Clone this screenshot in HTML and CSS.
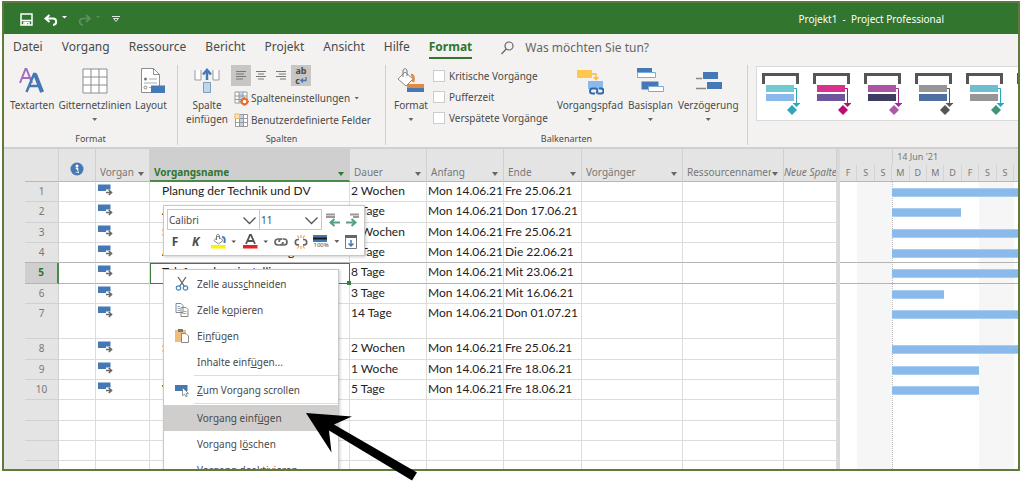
FILE: index.html
```html
<!DOCTYPE html>
<html lang="de">
<head>
  <meta charset="UTF-8" />
  <meta name="viewport" content="width=device-width, initial-scale=1.0" />
  <title>Projekt1 - Project Professional</title>
  <link rel="stylesheet" href="styles.css">
</head>
<body>
  <!-- Shared icons -->
  <svg class="sprite" aria-hidden="true">
    <symbol id="i-task" viewBox="0 0 15 12">
      <path d="M0 .5h12.500v5H8V7H0z" fill="#4479b5"/>
      <path d="M8 8.500h5M10.800 6l2.700 2.500-2.700 2.500" fill="none" stroke="#666" stroke-width="1.600"/>
    </symbol>
    <symbol id="i-style" viewBox="0 0 38 42">
      <path d="M1.500 11V1.500h34V11" fill="none" stroke="#555" stroke-width="3"/>
      <path class="bar1" d="M4 12h28v7H4z"/>
      <path class="bar2" d="M4 21h28v7H4z"/>
      <path class="link" d="M32 15.500h2.500V30" fill="none"/>
      <path class="head" d="M30.500 30h8L34.500 34z"/>
      <path class="dia" d="M30 32l5 5-5 5-5-5z"/>
    </symbol>
  </svg>

  <div class="window">
    <header class="titlebar">
      <div class="quick">
        <button type="button" aria-label="Speichern"><svg width="13" height="13" viewBox="0 0 13 13"><path d="M1 1h11v11H1zM1 7.500h11M4 12V9.500h5V12" fill="none" stroke="#fff" stroke-width="1.500"/><path d="M5 9.500h2V12H5z" fill="#fff"/></svg></button>
        <button type="button" aria-label="Rückgängig"><svg width="23" height="12" viewBox="0 0 23 12"><path d="M5.500 1L1.500 4.500 5.500 8M2 4.500h7c4 0 4.500 6 0 6.500" fill="none" stroke="#fff" stroke-width="2"/><path d="M18 2h5l-2.500 2.500z" fill="#fff"/></svg></button>
        <button type="button" aria-label="Wiederholen" disabled><svg width="23" height="12" viewBox="0 0 23 12"><path d="M8 1l4 3.500L8 8M12 4.500H5c-4.500 0-4.500 6 0 6.500" fill="none" stroke="#5b915a" stroke-width="1.700"/><path d="M18 2h4l-2 2z" fill="#5b915a"/></svg></button>
        <button type="button" aria-label="Symbolleiste anpassen"><svg width="8" height="7" viewBox="0 0 8 7"><path d="M0 .5h8M1.500 2.500h5L4 5.500z" fill="none" stroke="#dfe9df"/></svg></button>
      </div>
      <div class="title">Projekt1 &nbsp;-&nbsp; Project Professional</div>
    </header>

    <nav class="tabs">
      <a href="#datei">Datei</a>
      <a href="#vorgang">Vorgang</a>
      <a href="#ressource">Ressource</a>
      <a href="#bericht">Bericht</a>
      <a href="#projekt">Projekt</a>
      <a href="#ansicht">Ansicht</a>
      <a href="#hilfe">Hilfe</a>
      <a href="#format" class="active">Format</a>
      <label class="search">
        <svg width="13" height="14" viewBox="0 0 13 14"><circle cx="8" cy="5" r="4" fill="none" stroke="#666" stroke-width="1.200"/><path d="M5.200 8L.5 13" stroke="#666" stroke-width="1.200"/></svg>
        <input type="text" placeholder="Was möchten Sie tun?" aria-label="Was möchten Sie tun?">
      </label>
    </nav>

    <section class="ribbon">
      <div class="group group-format">
        <div class="tools">
          <button type="button" class="big">
            <svg width="28" height="28" viewBox="0 0 28 28"><path d="M2 16L7.500 2h1L14 16M4 11h8" fill="none" stroke="#a26cc2" stroke-width="2"/><path d="M8.500 25L16 7h1l7.500 18M11.500 19h9.500" fill="none" stroke="#4479b5" stroke-width="2.500"/><path d="M17 7l7 18" stroke="#4479b5" stroke-width="4"/></svg>
            <span>Textarten</span>
          </button>
          <button type="button" class="big">
            <svg width="28" height="28" viewBox="0 0 28 28"><path d="M2 2h24v24H2zM10 2v24M18 2v24M2 10h24M2 18h24" fill="#fff" stroke="#8d8d8d"/></svg>
            <span>Gitternetzlinien</span>
            <i class="caret"></i>
          </button>
          <button type="button" class="big">
            <svg width="28" height="28" viewBox="0 0 28 28"><path d="M4.500 1.500h12l6 6v18h-18z" fill="#fff" stroke="#8d8d8d"/><path d="M16.500 1.500v6h6" fill="none" stroke="#8d8d8d"/><circle cx="8.500" cy="12" r="1.500" fill="#777"/><circle cx="8.500" cy="20.500" r="1.500" fill="none" stroke="#888"/><path d="M12 12h8M7 16h13M12 20.500h3" stroke="#aaa"/><path d="M14 18.500h14V26H14z" fill="#4479b5"/></svg>
            <span>Layout</span>
          </button>
        </div>
        <div class="group-name">Format</div>
      </div>

      <div class="group group-columns">
        <div class="tools">
          <button type="button" class="big">
            <svg width="28" height="28" viewBox="0 0 28 28"><path d="M2 3v10h6V3M20 3v10h6V3" fill="#fff" stroke="#999"/><path d="M14 13V4M10 7.500L14 3l4 4.500" fill="none" stroke="#4479b5" stroke-width="2.500"/><path d="M10.500 15.500h7v10h-7z" fill="#bed5ea" stroke="#7d9cba"/></svg>
            <span>Spalte</span>
            <span class="second">einfügen</span>
          </button>
          <div class="stack">
            <div class="aligns">
              <button type="button" class="on" aria-label="Linksbündig"><svg width="12" height="11" viewBox="0 0 12 11"><path d="M1 1.500h10M1 4h8M1 6.500h10M1 9h7" stroke="#777"/></svg></button>
              <button type="button" aria-label="Zentriert"><svg width="12" height="11" viewBox="0 0 12 11"><path d="M1 1.500h10M3 4h6M1 6.500h10M3 9h6" stroke="#777"/></svg></button>
              <button type="button" aria-label="Rechtsbündig"><svg width="12" height="11" viewBox="0 0 12 11"><path d="M1 1.500h10M4 4h7M1 6.500h10M5 9h6" stroke="#777"/></svg></button>
              <button type="button" class="on wrap" aria-label="Textumbruch"><span>ab</span><span>c<svg width="7" height="7" viewBox="0 0 7 7"><path d="M6 0v3.500H1M3 1.500l-2 2 2 2" fill="none" stroke="#4479b5" stroke-width="1.300"/></svg></span></button>
            </div>
            <button type="button" class="small">
              <svg width="15" height="15" viewBox="0 0 15 15"><path d="M1 1h12v11H1z" fill="#fff" stroke="#999"/><path d="M5 1h4v11H5z" fill="#bcd3e9"/><path d="M1 5h12M1 8.500h12M5 1v11M9 1v11" stroke="#999"/><circle cx="10.500" cy="10.500" r="2.800" fill="#fff" stroke="#e5702b" stroke-width="2"/><path d="M10.500 6v2M10.500 13v2M6 10.500h2M13 10.500h2" stroke="#e5702b" stroke-width="1.500"/></svg>
              Spalteneinstellungen<i class="caret"></i>
            </button>
            <button type="button" class="small">
              <svg width="15" height="15" viewBox="0 0 15 15"><path d="M1.500 1.500h12v12h-12z" fill="#fff" stroke="#999"/><path d="M6 2h4v11H6z" fill="#bcd3e9"/><path d="M1 5.500h12M1 9.500h12M5.500 1v12M9.500 1v12" stroke="#999"/><path d="M1 1h4.500v4.500H1z" fill="#fbe3bb" stroke="#efb661"/></svg>
              Benutzerdefinierte Felder
            </button>
          </div>
        </div>
        <div class="group-name">Spalten</div>
      </div>

      <div class="group group-bars">
        <div class="tools">
          <button type="button" class="big">
            <svg width="28" height="28" viewBox="0 0 28 28"><path d="M8 5l8 7-7 7-8-7z" fill="#fff" stroke="#888"/><path d="M6 10V4c0-3 4-3 4 0v5" fill="none" stroke="#777"/><path d="M14 8c3 0 3 4 2 7" fill="none" stroke="#e08a45" stroke-width="2.500"/><path d="M10 17h17v4H10z" fill="#e08a45"/><path d="M10 21h17v4H10z" fill="#4479b5"/></svg>
            <span>Format</span>
            <i class="caret"></i>
          </button>
          <div class="checks">
            <label><input type="checkbox">Kritische Vorgänge</label>
            <label><input type="checkbox">Pufferzeit</label>
            <label><input type="checkbox">Verspätete Vorgänge</label>
          </div>
          <button type="button" class="big">
            <svg width="28" height="28" viewBox="0 0 28 28"><path d="M1 3h15v8H1z" fill="#fdc84b"/><path d="M16 7h4v5M17.500 10l2.500 2.500 2.500-2.500" fill="none" stroke="#fbb92e" stroke-width="1.300"/><path d="M12 14h15v8H12z" fill="#8ab9ec"/><path d="M20 21.500h-3.500a2 2 0 0 0 0 5H19M20 21.500a2.500 2.500 0 0 1 0 4.500M21.500 26.500H25a2 2 0 0 0 0-5h-2" fill="none" stroke="#2f69ab" stroke-width="2"/></svg>
            <span>Vorgangspfad</span>
            <i class="caret"></i>
          </button>
          <button type="button" class="big">
            <svg width="28" height="28" viewBox="0 0 28 28"><path d="M1 1h15v5H1z" fill="#4479b5"/><path d="M1.500 5.500h18v5h-18z" fill="#fff" stroke="#7eabd5"/><path d="M5.500 14.500h17v8h-17z" fill="#4479b5"/><path d="M12.500 19.500h15v5h-15z" fill="#fff" stroke="#7eabd5"/></svg>
            <span>Basisplan</span>
            <i class="caret"></i>
          </button>
          <button type="button" class="big">
            <svg width="28" height="28" viewBox="0 0 28 28"><path d="M9 5h15v7H9zM13 15h15v7H13z" fill="#4479b5"/><path d="M2 11.500h6M2 21.500h10" stroke="#888" stroke-width="1.500"/></svg>
            <span>Verzögerung</span>
            <i class="caret"></i>
          </button>
        </div>
        <div class="group-name">Balkenarten</div>
      </div>

      <div class="gallery">
        <button type="button" class="s-teal" aria-label="Format 1"><svg width="38" height="42"><use href="#i-style"/></svg></button>
        <button type="button" class="s-pink" aria-label="Format 2"><svg width="38" height="42"><use href="#i-style"/></svg></button>
        <button type="button" class="s-plum" aria-label="Format 3"><svg width="38" height="42"><use href="#i-style"/></svg></button>
        <button type="button" class="s-gray" aria-label="Format 4"><svg width="38" height="42"><use href="#i-style"/></svg></button>
        <button type="button" class="s-green" aria-label="Format 5"><svg width="38" height="42"><use href="#i-style"/></svg></button>
        <button type="button" class="s-gray" aria-label="Format 6"><svg width="38" height="42"><use href="#i-style"/></svg></button>
      </div>
    </section>

    <main class="sheet">
      <table class="tasks">
        <colgroup>
          <col class="c-num"><col class="c-info"><col class="c-mode"><col class="c-name"><col class="c-date"><col class="c-date"><col class="c-end"><col class="c-pre"><col class="c-pre"><col class="c-new">
        </colgroup>
        <thead>
          <tr>
            <th></th>
            <th class="info"><svg width="14" height="14" viewBox="0 0 14 14"><circle cx="7" cy="7" r="6.500" fill="#4479b5"/><path d="M6 3h2v2H6zM5.500 6H8v4.500h1M5.500 10.500H9" stroke="#fff" fill="#fff" stroke-width=".6"/></svg></th>
            <th><div><span>Vorgan</span><i class="drop"></i></div></th>
            <th class="current"><div><span>Vorgangsname</span><i class="drop"></i></div></th>
            <th><div><span>Dauer</span><i class="drop"></i></div></th>
            <th><div><span>Anfang</span><i class="drop"></i></div></th>
            <th><div><span>Ende</span><i class="drop"></i></div></th>
            <th><div><span>Vorgänger</span><i class="drop"></i></div></th>
            <th><div><span>Ressourcennamen</span><i class="drop"></i></div></th>
            <th class="new"><div><span>Neue Spalte</span></div></th>
          </tr>
        </thead>
        <tbody>
          <tr><th>1</th><td></td><td><svg class="task"><use href="#i-task"/></svg></td><td class="name">Planung der Technik und DV</td><td>2 Wochen</td><td>Mon 14.06.21</td><td>Fre 25.06.21</td><td></td><td></td><td></td></tr>
          <tr><th>2</th><td></td><td><svg class="task"><use href="#i-task"/></svg></td><td class="name">A</td><td>4 Tage</td><td>Mon 14.06.21</td><td>Don 17.06.21</td><td></td><td></td><td></td></tr>
          <tr><th>3</th><td></td><td><svg class="task"><use href="#i-task"/></svg></td><td class="name">S</td><td>2 Wochen</td><td>Mon 14.06.21</td><td>Fre 25.06.21</td><td></td><td></td><td></td></tr>
          <tr><th>4</th><td></td><td><svg class="task"><use href="#i-task"/></svg></td><td class="name">Arbeitsmittelbeschaffung</td><td>7 Tage</td><td>Mon 14.06.21</td><td>Die 22.06.21</td><td></td><td></td><td></td></tr>
          <tr class="selected"><th>5</th><td></td><td><svg class="task"><use href="#i-task"/></svg></td><td class="name">Telefonanlage installieren</td><td>8 Tage</td><td>Mon 14.06.21</td><td>Mit 23.06.21</td><td></td><td></td><td></td></tr>
          <tr><th>6</th><td></td><td><svg class="task"><use href="#i-task"/></svg></td><td class="name"></td><td>3 Tage</td><td>Mon 14.06.21</td><td>Mit 16.06.21</td><td></td><td></td><td></td></tr>
          <tr class="tall"><th>7</th><td></td><td><svg class="task"><use href="#i-task"/></svg></td><td class="name"></td><td>14 Tage</td><td>Mon 14.06.21</td><td>Don 01.07.21</td><td></td><td></td><td></td></tr>
          <tr><th>8</th><td></td><td><svg class="task"><use href="#i-task"/></svg></td><td class="name">S</td><td>2 Wochen</td><td>Mon 14.06.21</td><td>Fre 25.06.21</td><td></td><td></td><td></td></tr>
          <tr><th>9</th><td></td><td><svg class="task"><use href="#i-task"/></svg></td><td class="name"></td><td>1 Woche</td><td>Mon 14.06.21</td><td>Fre 18.06.21</td><td></td><td></td><td></td></tr>
          <tr><th>10</th><td></td><td><svg class="task"><use href="#i-task"/></svg></td><td class="name">V</td><td>5 Tage</td><td>Mon 14.06.21</td><td>Fre 18.06.21</td><td></td><td></td><td></td></tr>
          <tr><th></th><td></td><td></td><td></td><td></td><td></td><td></td><td></td><td></td><td></td></tr>
          <tr><th></th><td></td><td></td><td></td><td></td><td></td><td></td><td></td><td></td><td></td></tr>
          <tr><th></th><td></td><td></td><td></td><td></td><td></td><td></td><td></td><td></td><td></td></tr>
          <tr><th></th><td></td><td></td><td></td><td></td><td></td><td></td><td></td><td></td><td></td></tr>
        </tbody>
      </table>

      <div class="chart">
        <div class="scale">
          <div class="weeks"><span></span><span>14 Jun '21</span></div>
          <div class="days"><span>F</span><span>S</span><span>S</span><span>M</span><span>D</span><span>M</span><span>D</span><span>F</span><span>S</span><span>S</span></div>
        </div>
        <div class="plot">
          <div class="stripes"><i></i><i class="off"></i><i class="off"></i><i class="start"></i><i></i><i></i><i></i><i></i><i class="off"></i><i class="off"></i></div>
          <div class="line"><b style="width: 170%"></b></div>
          <div class="line"><b style="width: 57%"></b></div>
          <div class="line"><b style="width: 170%"></b></div>
          <div class="line"><b style="width: 128%"></b></div>
          <div class="line selected"><b style="width: 142%"></b></div>
          <div class="line"><b style="width: 43%"></b></div>
          <div class="line tall"><b style="width: 256%"></b></div>
          <div class="line"><b style="width: 170%"></b></div>
          <div class="line"><b style="width: 71%"></b></div>
          <div class="line"><b style="width: 71%"></b></div>
        </div>
      </div>
    </main>

    <!-- Mini toolbar -->
    <div class="minibar">
      <div class="mini-fields">
        <div class="field font"><select aria-label="Schriftart"><option>Calibri</option></select><svg width="13" height="8" viewBox="0 0 13 8"><path d="M.5.5l6 6 6-6" fill="none" stroke="#555" stroke-width="1.300"/></svg></div>
        <div class="field size"><select aria-label="Schriftgrad"><option>11</option></select><svg width="13" height="8" viewBox="0 0 13 8"><path d="M.5.5l6 6 6-6" fill="none" stroke="#555" stroke-width="1.300"/></svg></div>
        <button type="button" aria-label="Höher stufen"><svg width="15" height="14" viewBox="0 0 15 14"><path d="M0 1.500h9M0 4h9" stroke="#999" stroke-width="2"/><path d="M14 9.500H5M8.500 6L4.500 9.500l4 3.500" fill="none" stroke="#56a183" stroke-width="2"/></svg></button>
        <button type="button" aria-label="Tiefer stufen"><svg width="15" height="14" viewBox="0 0 15 14"><path d="M5 1.500h9M8 4h6" stroke="#999" stroke-width="2"/><path d="M1 9.500h9M6.500 6l4 3.500-4 3.500" fill="none" stroke="#56a183" stroke-width="2"/></svg></button>
      </div>
      <div class="mini-tools">
        <button type="button" class="bold">F</button>
        <button type="button" class="bold italic">K</button>
        <button type="button" aria-label="Hintergrundfarbe"><svg width="26" height="15" viewBox="0 0 26 15"><path d="M7 2l5 4.500L7.500 10 3 6.500z" fill="#fff" stroke="#888"/><path d="M5.500 6V2c0-2 3-2 3 0v3" fill="none" stroke="#777"/><path d="M11 3c3 0 3 2 2.500 6" fill="none" stroke="#4479b5" stroke-width="2"/><path d="M0 11h14.500v3.500H0z" fill="#fff100"/><path d="M20.500 6.500h4.500L22.700 9z" fill="#555"/></svg></button>
        <button type="button" aria-label="Schriftfarbe"><svg width="26" height="15" viewBox="0 0 26 15"><path d="M3 10L7 .8h1L12 10M4.500 7h6" fill="none" stroke="#555" stroke-width="1.800"/><path d="M0 11h14.500v3.500H0z" fill="#e81f27"/><path d="M20.500 6.500h4.500L22.700 9z" fill="#555"/></svg></button>
        <button type="button" aria-label="Verknüpfen"><svg width="14" height="14" viewBox="0 0 14 14"><path d="M7.500 4H4a3 3 0 0 0 0 6h2M5 7a3 3 0 0 1 3-3M6.500 10H10a3 3 0 0 0 0-6H8.500M9 7a3 3 0 0 1-3 3" fill="none" stroke="#666" stroke-width="1.700"/></svg></button>
        <button type="button" aria-label="Verknüpfung aufheben"><svg width="14" height="14" viewBox="0 0 14 14"><path d="M5 4.500H4a2.700 2.700 0 0 0 0 5.400h1M9 4.500h1a2.700 2.700 0 0 1 0 5.400H9" fill="none" stroke="#666" stroke-width="1.700"/><path d="M7 0v3M3.500.5L5 3M10.500.5L9 3M7 14v-3M3.500 13.500L5 11M10.500 13.500L9 11" stroke="#ee9a4d" stroke-width="1.100"/></svg></button>
        <button type="button" class="percent" aria-label="100 % abgeschlossen"><svg width="14" height="7" viewBox="0 0 14 7"><path d="M0 0h14v7H0z" fill="#4479b5"/><path d="M0 2.500h14v2H0z" fill="#1c1c1c"/></svg><span>100%</span></button>
        <i class="caret"></i>
        <button type="button" aria-label="Scrollen"><svg width="12" height="14" viewBox="0 0 12 14"><path d="M.5.5h11v13H.5z" fill="#fff" stroke="#777"/><path d="M0 0h12v3H0z" fill="#666"/><path d="M6 5v6M3.500 8.500L6 11l2.500-2.500" fill="none" stroke="#4479b5" stroke-width="1.500"/></svg></button>
      </div>
    </div>

    <!-- Context menu -->
    <div class="menu" role="menu">
      <button type="button" role="menuitem"><svg width="14" height="14" viewBox="0 0 14 14"><path d="M3 0l6.500 9.500M11 0L4.500 9.500" stroke="#666" stroke-width="1.300"/><circle cx="3.500" cy="11" r="2.200" fill="none" stroke="#4b86bd" stroke-width="1.200"/><circle cx="10.500" cy="11" r="2.200" fill="none" stroke="#4b86bd" stroke-width="1.200"/></svg><span>Zelle auss<u>c</u>hneiden</span></button>
      <button type="button" role="menuitem"><svg width="14" height="14" viewBox="0 0 14 14"><path d="M1 .5h5l2 2v7H1zM6 4.500h5l2 2v7H6z" fill="#fff" stroke="#888"/><path d="M2.500 3.500H5M2.500 5.500H5M2.500 7.500H5M7.500 8.500h4M7.500 10.500h4" stroke="#7fb0dd"/></svg><span>Zelle k<u>o</u>pieren</span></button>
      <button type="button" role="menuitem"><svg width="14" height="14" viewBox="0 0 14 14"><path d="M0 1h11v12H0z" fill="#eebd7e"/><path d="M3 0h5v3H3z" fill="#777"/><path d="M6.500 4.500H11l2.500 2.500v6.500h-7z" fill="#fff" stroke="#888"/></svg><span>Ei<u>n</u>fügen</span></button>
      <button type="button" role="menuitem"><i></i><span>Inhalte einf<u>ü</u>gen...</span></button>
      <hr>
      <button type="button" role="menuitem"><svg width="14" height="14" viewBox="0 0 14 14"><path d="M0 2h12.500v6H0z" fill="#4479b5"/><path d="M7.500 4.500l6 6-2.500.2 1.300 2.500-1.500.5-1.200-2.500-2.100 1.500z" fill="#fff" stroke="#777" stroke-width=".8"/></svg><span><u>Z</u>um Vorgang scrollen</span></button>
      <hr>
      <button type="button" role="menuitem" class="hover"><i></i><span>Vorgang einf<u>ü</u>gen</span></button>
      <button type="button" role="menuitem"><i></i><span>Vorgang l<u>ö</u>schen</span></button>
      <button type="button" role="menuitem"><i></i><span>Vorgang deak<u>t</u>ivieren</span></button>
    </div>
  </div>

  <svg class="pointer" width="112" height="68" viewBox="0 0 112 68" aria-hidden="true"><path d="M0 0l46 3.500-18 8 83 48-5 8-83-50 2.500 22z"/></svg>
</body>
</html>
```
FILE: styles.css
```css
/* Variables & Reset */
:root {
  --green: #31752f;
  --frame: #5f7a3c;
  --ribbon: #f3f2f1;
  --head: #e4e4e4;
  --line: #dcdcdc;
  --mark: #b4b4b4;
  --text: #4a4a4a;
  --bar: #8ab9ec;
}
* { margin: 0; padding: 0; box-sizing: border-box; }
body { position: relative; height: 100vh; overflow: hidden; padding: 1px 4px 11px 2px; background: #fff; color: var(--text); font-family: 'Noto Sans', 'Open Sans', sans-serif; font-size: 10px; line-height: 14px; }
button, input, select { font: inherit; color: inherit; background: none; border: 0; }
button { white-space: nowrap; }
svg { display: block; flex: none; }
a { color: inherit; text-decoration: none; }
.sprite { position: absolute; width: 0; height: 0; }

.window { position: relative; display: flex; flex-direction: column; height: 100%; overflow: hidden; border: 2px solid var(--frame); background: #fff; }

/* Title bar */
.titlebar { display: flex; flex: none; justify-content: space-between; align-items: center; height: 31px; padding: 0 74px 0 16px; background: var(--green); color: #fff; }
.quick { display: flex; align-items: center; gap: 11px; padding-top: 2px; }
.quick button { display: block; }
.title { white-space: nowrap; }

/* Tabs */
.tabs { display: flex; flex: none; align-items: center; gap: 19px; height: 28px; padding-left: 9px; background: var(--ribbon); font-size: 12px; line-height: 20px; }
.tabs a { border-bottom: 2px solid transparent; }
.tabs .active { color: var(--green); font-weight: 700; border-color: var(--green); }
.search { display: flex; align-items: center; gap: 11px; margin-left: 10px; }
.search input { width: 160px; outline: 0; }
.search input::placeholder { color: #666; opacity: 1; }

/* Ribbon */
.ribbon { display: flex; flex: none; height: 87px; padding-top: 3px; background: var(--ribbon); border-bottom: 2px solid #d0d0d0; overflow: hidden; }
.group { display: flex; flex: none; flex-direction: column; justify-content: space-between; height: 80px; border-right: 1px solid #cfcfcf; }
.group-format { width: 174px; }
.group-columns { width: 208px; }
.group-bars { width: 362px; }
.group-name { text-align: center; font-size: 9px; line-height: 12px; }
.tools { display: flex; align-items: flex-start; }
.group-format .tools { gap: 4px; padding-left: 6px; }
.group-columns .tools { gap: 3px; padding-left: 8px; }
.group-bars .tools { gap: 5px; padding-left: 8px; }
.big { display: flex; flex-direction: column; align-items: center; padding-top: 2px; }
.big span { margin-top: 3px; }
.big .second { margin-top: 0; }
.caret { display: inline-block; flex: none; width: 5px; height: 3px; background: #666; clip-path: polygon(0 0, 100% 0, 50% 100%); }
.big .caret { margin-top: 6px; }
.stack { display: flex; flex-direction: column; }
.aligns { display: flex; height: 21px; margin-bottom: 1px; }
.aligns button { display: flex; align-items: center; justify-content: center; width: 20px; }
.aligns .on { background: #c8c6c4; }
.aligns .wrap { flex-direction: column; font-size: 9px; line-height: 10px; font-weight: 700; }
.wrap span { display: flex; align-items: center; }
.small { display: flex; align-items: center; gap: 2px; height: 22px; padding-left: 3px; }
.small .caret { margin-left: 2px; }
.checks { display: flex; flex-direction: column; width: 119px; }
.checks label { display: flex; align-items: center; gap: 4px; height: 21px; white-space: nowrap; }
.checks input { appearance: none; width: 12px; height: 12px; background: #fff; border: 1px solid #ccc; }

/* Style gallery */
.gallery { display: flex; flex: 1; gap: 13px; height: 55px; margin: 1px 0 0 8px; padding: 4px 5px; overflow: hidden; background: #fff; border: 1px solid #dadada; border-right: 0; }
.gallery button { flex: none; }
.bar1 { fill: var(--one); }
.bar2 { fill: var(--two); }
.link { stroke: var(--tip); }
.head { fill: var(--tip); }
.dia { fill: var(--dia); }
.s-teal { --one: #6fcad2; --two: #8ab9ec; --tip: #30a7b8; --dia: #30a7b8; }
.s-pink { --one: #d8328c; --two: #6f559b; --tip: #bd0a75; --dia: #bd0a75; }
.s-plum { --one: #aa55a3; --two: #3f3c61; --tip: #9b2a91; --dia: #ab5aa7; }
.s-gray { --one: #969696; --two: #4d70a2; --tip: #555; --dia: #555; }
.s-green { --one: #6cbfd1; --two: #969696; --tip: #2ca5bd; --dia: #41937b; }

/* Task table */
.sheet { display: flex; flex: 1; min-height: 0; padding-left: 21px; overflow: hidden; background: var(--head); }
.tasks { flex: none; width: 812px; align-self: flex-start; table-layout: fixed; border-collapse: separate; border-spacing: 0; background: #fff; }
.c-num { width: 34px; }
.c-info { width: 37px; }
.c-mode { width: 54px; }
.c-name { width: 200px; }
.c-date { width: 77px; }
.c-end { width: 78px; }
.c-pre { width: 101px; }
.c-new { width: 53px; }
.tasks th { background: var(--head); color: #777; font-weight: 400; border-right: 1px solid #d0d0d0; border-bottom: 1px solid #d0d0d0; }
.tasks thead th { height: 33px; padding: 0 3px 2px 4px; vertical-align: bottom; text-align: left; border-bottom-color: #b8b8b8; }
thead th div { display: flex; align-items: center; justify-content: space-between; }
thead th span { overflow: hidden; white-space: nowrap; }
.tasks thead .info { padding: 0 0 5px 11px; }
.drop { flex: none; width: 6px; height: 4px; margin: 4px 2px 0 1px; background: #666; clip-path: polygon(0 0, 100% 0, 50% 100%); }
.tasks thead .current { background: #cfcfcf; color: var(--green); font-weight: 700; padding-bottom: 1px; border-bottom: 2px solid #4a8a48; }
.current .drop { background: var(--green); }
.tasks thead .new { padding: 0 0 2px; font-style: italic; }
.tasks .new div { justify-content: flex-end; }
.tasks td { padding-left: 1px; overflow: hidden; white-space: nowrap; vertical-align: top; border-right: 1px solid var(--line); border-bottom: 1px solid var(--line); color: #222; font-family: Lato, 'Noto Sans', sans-serif; font-size: 12px; line-height: 18px; }
.tasks tbody th { vertical-align: top; line-height: 18px; }
.tasks tbody tr { height: 20px; }
.tasks tbody tr:nth-child(3n+2) { height: 21px; }
.tasks tbody tr.tall { height: 35px; }
.tasks .name { padding-left: 12px; }
.task { width: 15px; height: 12px; margin: 2px 0 0 1px; }
.tasks tbody tr:nth-child(4) > *, .tasks tr.selected > * { border-bottom-color: var(--mark); }
.tasks .selected th { background: #cfcfcf; color: var(--green); font-weight: 700; border-right: 2px solid #4a8a48; }
.tasks .selected .name { position: relative; overflow: visible; box-shadow: inset 1px 1px #3a803a; border-color: #3a803a; }
.selected .name::after { content: ''; position: absolute; right: -2px; bottom: -2px; width: 4px; height: 4px; background: #3a803a; }

/* Gantt chart */
.chart { display: flex; flex: 1; flex-direction: column; min-width: 0; border-left: 3px solid #d9d9d9; background: #fff; overflow: hidden; }
.scale { flex: none; height: 33px; padding-right: 4px; background: var(--head); border-bottom: 1px solid #b8b8b8; color: #777; font-size: 9px; line-height: 16px; }
.weeks, .days { display: flex; }
.weeks span { width: 70%; padding-left: 4px; border-left: 1px solid #cfcfcf; }
.weeks span:first-child { width: 30%; border-left: 0; }
.days span { flex: 1; text-align: center; border-right: 1px solid #d4d4d4; }
.plot { position: relative; flex: 1; }
.stripes { position: absolute; inset: 0 4px 0 0; display: flex; }
.stripes i { flex: 1; }
.stripes .off { background: #f6f6f6; }
.stripes .start { border-left: 1px dotted #bbb; }
.line { position: relative; height: 20px; padding: 6px 4px 0 29%; overflow: hidden; }
.line:nth-child(3n) { height: 21px; }
.line.tall { height: 35px; }
.line b { display: block; height: 9px; background: var(--bar); border: 1px solid #a9ccf1; border-width: 1px 0; }
.line:nth-child(5), .line.selected { border-bottom: 1px solid var(--mark); }

/* Mini toolbar */
.minibar { position: absolute; left: 159px; top: 202px; width: 202px; height: 51px; padding: 3px; background: #fff; border: 1px solid #c8c8c8; box-shadow: 1px 1px 3px rgba(0,0,0,0.2); }
.mini-fields { display: flex; align-items: center; }
.field { position: relative; height: 21px; border: 1px solid #c8c8c8; }
.field select { width: 100%; height: 100%; padding-left: 1px; appearance: none; }
.field svg { position: absolute; right: 3px; top: 7px; pointer-events: none; }
.font { width: 93px; }
.size { width: 62px; border-left: 0; }
.mini-fields button { margin-left: 4px; }
.mini-tools { display: flex; align-items: center; justify-content: space-between; height: 23px; padding: 0 4px 0 3px; }
.mini-tools .bold { width: 10px; margin-right: 5px; font-size: 12px; font-weight: 700; }
.mini-tools .italic { font-style: italic; }
.percent span { display: block; font-size: 6px; line-height: 7px; }

/* Context menu */
.menu { position: absolute; left: 159px; top: 266px; width: 176px; padding: 1px 0; background: #fff; border: 1px solid #c8c8c8; box-shadow: 1px 1px 3px rgba(0,0,0,0.2); }
.menu button { display: flex; align-items: center; gap: 8px; width: 100%; height: 26px; padding-left: 11px; }
.menu i { width: 14px; }
.menu .hover { background: #d0cecd; }
.menu hr { height: 2px; margin-left: 30px; border: 0; border-top: 1px solid #ddd; }

/* Pointer arrow */
.pointer { position: absolute; left: 306px; top: 413px; }
```
